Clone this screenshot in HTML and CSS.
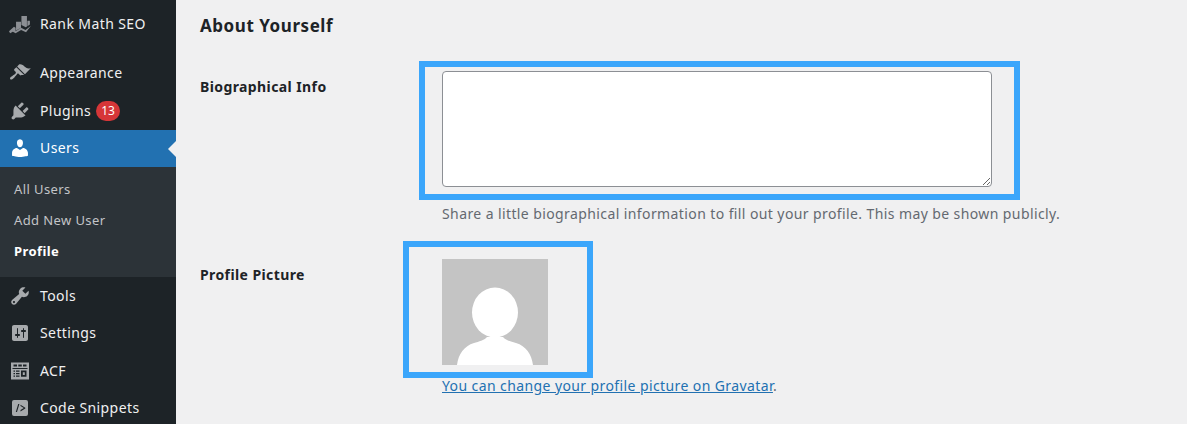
FILE: index.html
```html
<!DOCTYPE html>
<html lang="en">
<head>
    <meta charset="UTF-8">
    <meta name="viewport" content="width=device-width, initial-scale=1.0">
    <title>Profile</title>
    <link rel="stylesheet" href="styles.css">
</head>
<body>
    <div class="wrap">
        <nav class="sidebar">
            <ul class="menu">
                <li class="menu-item">
                    <svg class="icon icon-rank" viewBox="0 0 20 20"><path d="M6.400 8h4.500v5.500l-4.500 2.500zM11.300 2.700h5v9.500l-1 .8-4-2zM16.700 7H19v3.500l-2.300 1.500zM0 16.500l4.500-4 1.500 1v3l5-3 4 2 5-4-4.500 6-4.500-2-5 3-2.500-1.500-2.500 1.500z"/></svg>
                    <span class="menu-label">Rank Math SEO</span>
                </li>
                <li class="menu-item menu-first">
                    <svg class="icon" viewBox="0 0 20 20"><path d="M14.48 11.06L7.41 3.99l1.5-1.5c.5-.56 2.3-.47 3.51.32 1.21.8 1.43 1.28 2.91 2.1 1.18.64 2.45 1.26 4.45.85zm-.71.71L6.7 4.7 4.93 6.47c-.39.39-.39 1.02 0 1.41l1.06 1.06c.39.39.39 1.03 0 1.42-.6.6-1.43 1.11-2.21 1.69-.35.26-.7.53-1.01.84C1.43 13.23.4 14.85 1.2 15.6c.75.8 2.37-.23 3.71-1.57.31-.31.58-.66.84-1.01.58-.78 1.09-1.61 1.69-2.21.39-.39 1.03-.39 1.42 0l1.06 1.06c.39.39 1.02.39 1.41 0z"/></svg>
                    <span class="menu-label">Appearance</span>
                </li>
                <li class="menu-item">
                    <svg class="icon" viewBox="0 0 20 20"><path d="M13.11 4.36L9.87 7.6 8 5.73l3.24-3.24c.35-.34 1.05-.2 1.56.32.52.51.66 1.21.31 1.55zm-8 1.77l.91-1.12 9.01 9.01-1.19.84c-.71.71-2.63 1.16-3.82 1.16H6.14L4.9 17.26c-.59.59-1.54.59-2.12 0-.59-.58-.59-1.53 0-2.12l1.24-1.24v-3.88c0-1.13.4-3.19 1.09-3.89zm7.26 3.97l3.24-3.24c.34-.35 1.04-.21 1.55.31.52.51.66 1.21.31 1.55l-3.24 3.25z"/></svg>
                    <span class="menu-label">Plugins</span> <span class="badge">13</span>
                </li>
                <li class="menu-item menu-current">
                    <svg class="icon" viewBox="0 0 20 20"><path d="M10 9.25c-2.27 0-2.73-3.44-2.73-3.44C7 4.02 7.82 2 9.97 2c2.16 0 2.98 2.02 2.71 3.81 0 0-.41 3.44-2.68 3.44zm0 2.57L12.72 10c2.39 0 4.52 2.33 4.52 4.53v2.49s-3.65 1.13-7.24 1.13c-3.65 0-7.24-1.13-7.24-1.13v-2.49c0-2.25 1.94-4.48 4.47-4.48z"/></svg>
                    <span class="menu-label">Users</span>
                </li>
                <li>
                    <ul class="submenu">
                        <li>All Users</li>
                        <li>Add New User</li>
                        <li class="submenu-current">Profile</li>
                    </ul>
                </li>
                <li class="menu-item">
                    <svg class="icon" viewBox="0 0 20 20"><path d="M16.68 9.77c-1.34 1.34-3.3 1.67-4.95.99l-5.41 6.52c-.99.99-2.59.99-3.58 0s-.99-2.59 0-3.57l6.52-5.42c-.68-1.65-.35-3.61.99-4.95 1.28-1.28 3.12-1.62 4.72-1.06l-2.89 2.89 2.82 2.82 2.86-2.87c.53 1.58.18 3.39-1.08 4.65zM3.81 16.21c.4.39 1.04.39 1.43 0 .4-.4.4-1.04 0-1.43-.39-.4-1.03-.4-1.43 0-.39.39-.39 1.03 0 1.43z"/></svg>
                    <span class="menu-label">Tools</span>
                </li>
                <li class="menu-item menu-short">
                    <svg class="icon icon-small" viewBox="0 0 20 20"><path d="M18 16V4c0-1.1-.9-2-2-2H4c-1.1 0-2 .9-2 2v12c0 1.1.9 2 2 2h12c1.1 0 2-.9 2-2zM8 11h1c.55 0 1 .45 1 1s-.45 1-1 1H8v1.5c0 .28-.22.5-.5.5s-.5-.22-.5-.5V13H6c-.55 0-1-.45-1-1s.45-1 1-1h1V5.5c0-.28.22-.5.5-.5s.5.22.5.5V11zm5-2h-1c-.55 0-1-.45-1-1s.45-1 1-1h1V5.5c0-.28.22-.5.5-.5s.5.22.5.5V7h1c.55 0 1 .45 1 1s-.45 1-1 1h-1v5.5c0 .28-.22.5-.5.5s-.5-.22-.5-.5V9z"/></svg>
                    <span class="menu-label">Settings</span>
                </li>
                <li class="menu-item">
                    <svg class="icon icon-small" viewBox="0 0 20 20"><path fill-rule="evenodd" d="M1 1.500h18v17H1zM3.500 3.500h3.500v2H3.500zM8.300 3.500h3.500v2H8.300zM13 3.500h3.500v2H13zM2.500 7h15v1h-15zM3.500 9.500h1.500v1.200H3.500zM6 9.500h3.500v1.200H6zM3.500 12h1.500v1.200H3.500zM6 12h3.500v1.200H6zM3.500 14.500h1.500v1.200H3.500zM6 14.500h3.500v1.200H6zM11 9.500h5.500v6.200H11zM12.800 11.300v2.600h2v-2.600z"/></svg>
                    <span class="menu-label">ACF</span>
                </li>
                <li class="menu-item menu-short">
                    <svg class="icon icon-small" viewBox="0 0 20 20"><path fill-rule="evenodd" d="M4 2h12a2 2 0 0 1 2 2v12a2 2 0 0 1-2 2H4a2 2 0 0 1-2-2V4a2 2 0 0 1 2-2zM8.200 6L5.800 14h1.200l2.400-8zM10.500 6.700v1.400l3.300 2-3.300 2v1.400l4.800-3v-.8z"/></svg>
                    <span class="menu-label">Code Snippets</span>
                </li>
            </ul>
        </nav>

        <main class="content">
            <h2>About Yourself</h2>

            <div class="form-row row-bio">
                <div class="form-label">Biographical Info</div>
                <div class="form-field">
                    <div class="highlight highlight-bio">
                        <textarea class="bio-input"></textarea>
                    </div>
                    <p class="description">Share a little biographical information to fill out your profile. This may be shown publicly.</p>
                </div>
            </div>

            <div class="form-row row-picture">
                <div class="form-label">Profile Picture</div>
                <div class="form-field">
                    <div class="highlight highlight-picture">
                        <svg class="avatar" viewBox="0 0 106 106">
                            <rect width="106" height="106" fill="#c4c4c4"/>
                            <ellipse cx="53" cy="53.500" rx="23" ry="25" fill="#fff"/>
                            <path fill="#fff" d="M15 106c1.500-11 7-19 17-22 5-1.500 10-2.500 13-6h16c3 3.500 8 4.500 13 6 10 3 15.500 11 17 22z"/>
                        </svg>
                    </div>
                    <p class="picture-note"><a href="#">You can change your profile picture on Gravatar</a>.</p>
                </div>
            </div>
        </main>
    </div>
</body>
</html>
```

FILE: styles.css
```css
* {
    box-sizing: border-box;
}
html, body {
    margin: 0;
    height: 424px;
    overflow: hidden;
}
body {
    font-family: "Noto Sans", sans-serif;
    font-size: 14px;
    letter-spacing: .4px;
    color: #1d2327;
    background-color: #f0f0f1;
}
ul {
    list-style: none;
    margin: 0;
    padding: 0;
}
.wrap {
    display: flex;
    height: 424px;
}

/* sidebar */
.sidebar {
    width: 176px;
    flex-shrink: 0;
    padding-top: 5px;
    background-color: #1d2327;
}
.menu-item {
    display: flex;
    align-items: center;
    position: relative;
    height: 38px;
    padding-left: 9px;
    color: #f0f0f1;
}
.menu-first {
    margin-top: 11px;
}
.menu-short {
    height: 37px;
    padding-bottom: 1px;
}
.menu-label {
    margin-bottom: 2px;
}
.icon {
    width: 22px;
    height: 22px;
    margin-right: 9px;
    flex-shrink: 0;
    fill: #a7aaad;
}
.icon-small {
    width: 20px;
    height: 20px;
    margin-left: 1px;
    margin-right: 10px;
}
.icon-rank {
    fill: #8c8f94;
}
.badge {
    margin-left: 5px;
    padding: 0 5px;
    height: 20px;
    line-height: 20px;
    border-radius: 10px;
    font-size: 12px;
    letter-spacing: 0;
    color: #fff;
    background-color: #d63638;
}
.menu-current {
    height: 37px;
    padding-bottom: 1px;
    color: #fff;
    background-color: #2271b1;
}
.menu-current .icon {
    fill: #fff;
}
.menu-current::after {
    content: "";
    position: absolute;
    right: 0;
    top: 50%;
    margin-top: -8px;
    border: 8px solid transparent;
    border-right-color: #f0f0f1;
}
.submenu {
    height: 110px;
    padding-top: 7px;
    color: #c3c4c7;
    font-size: 13px;
    background-color: #2c3338;
}
.submenu li {
    height: 31px;
    line-height: 31px;
    padding-left: 14px;
}
.submenu-current {
    font-weight: 700;
    color: #fff;
}

/* form */
.content {
    flex: 1;
    padding: 0 24px;
}
h2 {
    margin: 14px 0 0;
    font-size: 17px;
    line-height: 24px;
    font-weight: 700;
    letter-spacing: .55px;
}
.form-row {
    display: flex;
}
.row-bio {
    margin-top: 23px;
}
.row-picture {
    margin-top: 17px;
}
.form-label {
    width: 203px;
    flex-shrink: 0;
    padding-top: 16px;
    font-weight: 700;
    line-height: 20px;
}
.row-picture .form-label {
    padding-top: 24px;
}
.form-field {
    flex: 1;
    min-width: 0;
}
.highlight {
    display: flex;
    border: 6px solid #3ba6fb;
}
.highlight-bio {
    width: 601px;
    height: 139px;
    margin-left: 16px;
    padding: 4px 0 0 17px;
}
.bio-input {
    display: block;
    width: 550px;
    height: 116px;
    margin: 0;
    padding: 4px 8px;
    border: 1px solid #8c8f94;
    border-radius: 4px;
    background-color: #fff;
    font-family: inherit;
}
.description {
    margin: 4px 0 0 39px;
    line-height: 20px;
    color: #646970;
}
.highlight-picture {
    width: 190px;
    height: 137px;
    padding: 12px 0 0 33px;
}
.avatar {
    display: block;
    width: 106px;
    height: 106px;
}
.picture-note {
    margin: -2px 0 0 39px;
    line-height: 20px;
    color: #646970;
}
.picture-note a {
    color: #2271b1;
}
```
